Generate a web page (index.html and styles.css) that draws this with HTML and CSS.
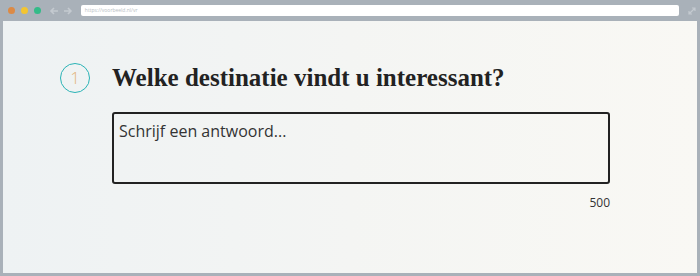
FILE: index.html
```html
<!DOCTYPE html>
<html lang="nl">
<head>
    <meta charset="UTF-8">
    <meta name="viewport" content="width=device-width, initial-scale=1.0">
    <title>Vraag</title>
    <link rel="stylesheet" href="styles.css">
</head>
<body>
    <div class="browser">
        <div class="toolbar">
            <span class="dot orange"></span>
            <span class="dot yellow"></span>
            <span class="dot green"></span>
            <svg class="arrow" width="10" height="10" viewBox="0 0 10 10"><path d="M9 5H2M5 2L2 5l3 3" fill="none" stroke="#c4cad0" stroke-width="1.6"/></svg>
            <svg class="arrow" width="10" height="10" viewBox="0 0 10 10"><path d="M1 5h7M5 2l3 3-3 3" fill="none" stroke="#c4cad0" stroke-width="1.6"/></svg>
            <div class="url">https://voorbeeld.nl/vr</div>
            <svg class="expand" width="10" height="10" viewBox="0 0 10 10"><path d="M2 8L8 2M5 2h3v3M2 5v3h3" fill="none" stroke="#c4cad0" stroke-width="1.2"/></svg>
        </div>
        <div class="page">
            <div class="question">
                <div class="number">1</div>
                <div class="body">
                    <h1>Welke destinatie vindt u interessant?</h1>
                    <textarea class="answer" placeholder="Schrijf een antwoord..."></textarea>
                    <div class="counter">500</div>
                </div>
            </div>
        </div>
    </div>
</body>
</html>
```

FILE: styles.css
```css
html, body {
    margin: 0;
    padding: 0;
}
body {
    width: 700px;
    height: 276px;
    overflow: hidden;
    font-family: "Open Sans", sans-serif;
}
.browser {
    height: 276px;
    box-sizing: border-box;
    background: #a9b1b9;
    padding: 0 3px 3px 3px;
    display: flex;
    flex-direction: column;
}
.toolbar {
    height: 21px;
    display: flex;
    align-items: center;
    padding-left: 5px;
}
.dot {
    width: 7px;
    height: 7px;
    border-radius: 50%;
    margin-right: 6px;
}
.orange { background: #dc8a45; }
.yellow { background: #f3c531; }
.green { background: #33bb88; }
.arrow {
    margin-left: 2px;
    margin-right: 2px;
}
.url {
    margin-left: 6px;
    width: 601px;
    height: 11px;
    background: #fff;
    border-radius: 2px;
    font-size: 5px;
    line-height: 11px;
    color: #b8bec4;
    padding-left: 4px;
    box-sizing: border-box;
}
.expand {
    margin-left: 8px;
}
.page {
    flex: 1;
    background: linear-gradient(90deg, #eef2f3 0%, #f4f5f3 50%, #f9f8f4 100%);
}
.question {
    display: flex;
    padding: 42px 0 0 57px;
}
.number {
    width: 30px;
    height: 30px;
    box-sizing: border-box;
    border: 1px solid #2ab3b6;
    border-radius: 50%;
    color: #e3b37a;
    font-family: "Open Sans", sans-serif;
    font-size: 17px;
    font-weight: 300;
    line-height: 28px;
    text-align: center;
    margin-top: 0;
}
.body {
    margin-left: 22px;
    width: 498px;
}
h1 {
    margin: 0;
    font-family: "Liberation Serif", serif;
    font-weight: bold;
    font-size: 25px;
    line-height: 30px;
    color: #222;
}
.answer {
    display: block;
    margin-top: 19px;
    width: 498px;
    height: 72px;
    box-sizing: border-box;
    border: 2px solid #222;
    border-radius: 3px;
    background: transparent;
    padding: 6px 5px;
    font-family: "Open Sans", sans-serif;
    font-size: 16px;
    color: #333;
    resize: none;
    outline: none;
}
.answer::placeholder {
    color: #333;
}
.counter {
    text-align: right;
    font-size: 12px;
    color: #333;
    margin-top: 10px;
}
```
